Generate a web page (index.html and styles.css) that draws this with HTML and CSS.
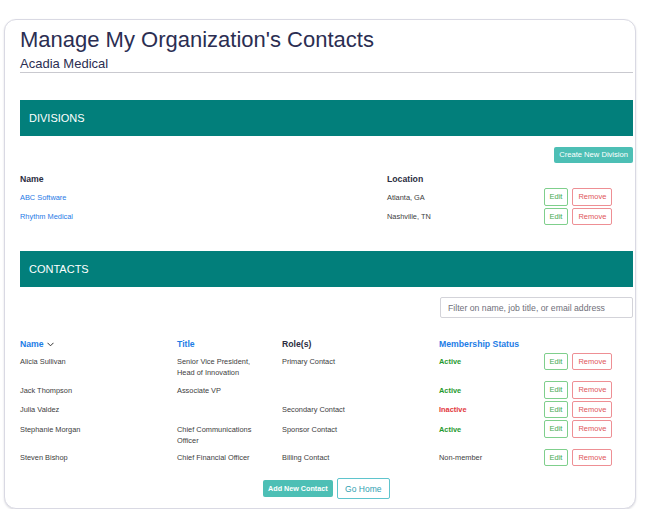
FILE: index.html
```html
<!DOCTYPE html>
<html>
<head>
<meta charset="utf-8">
<link rel="stylesheet" href="styles.css">
</head>
<body>
<div class="card">
  <h1 class="title">Manage My Organization's Contacts</h1>
  <div class="subtitle">Acadia Medical</div>

  <div class="bar bar-divisions">DIVISIONS</div>
  <div class="toolbar"><button class="btn-primary">Create New Division</button></div>
  <table class="grid div-grid">
    <colgroup><col class="dc1"><col class="dc2"><col></colgroup>
    <thead>
      <tr><th>Name</th><th>Location</th><th></th></tr>
    </thead>
    <tbody>
      <tr><td><a class="link">ABC Software</a></td><td>Atlanta, GA</td><td class="actions"><button class="btn-edit">Edit</button><button class="btn-remove">Remove</button></td></tr>
      <tr><td><a class="link">Rhythm Medical</a></td><td>Nashville, TN</td><td class="actions"><button class="btn-edit">Edit</button><button class="btn-remove">Remove</button></td></tr>
    </tbody>
  </table>

  <div class="bar bar-contacts">CONTACTS</div>
  <div class="filter-row"><input class="filter" type="text" placeholder="Filter on name, job title, or email address"></div>
  <table class="grid contact-grid">
    <colgroup><col class="cc1"><col class="cc2"><col class="cc3"><col class="cc4"><col></colgroup>
    <thead>
      <tr>
        <th class="sort">Name<svg class="chev" width="7" height="5" viewBox="0 0 7 5"><path d="M0.5 0.8 L3.5 3.8 L6.5 0.8" fill="none" stroke="#333" stroke-width="1"/></svg></th>
        <th class="sort">Title</th>
        <th>Role(s)</th>
        <th class="sort">Membership Status</th>
        <th></th>
      </tr>
    </thead>
    <tbody>
      <tr><td>Alicia Sullivan</td><td class="wrap">Senior Vice President, Head of Innovation</td><td>Primary Contact</td><td class="active">Active</td><td class="actions"><button class="btn-edit">Edit</button><button class="btn-remove">Remove</button></td></tr>
      <tr><td>Jack Thompson</td><td class="wrap">Associate VP</td><td></td><td class="active">Active</td><td class="actions"><button class="btn-edit">Edit</button><button class="btn-remove">Remove</button></td></tr>
      <tr><td>Julia Valdez</td><td class="wrap"></td><td>Secondary Contact</td><td class="inactive">Inactive</td><td class="actions"><button class="btn-edit">Edit</button><button class="btn-remove">Remove</button></td></tr>
      <tr><td>Stephanie Morgan</td><td class="wrap">Chief Communications Officer</td><td>Sponsor Contact</td><td class="active">Active</td><td class="actions"><button class="btn-edit">Edit</button><button class="btn-remove">Remove</button></td></tr>
      <tr><td>Steven Bishop</td><td class="wrap">Chief Financial Officer</td><td>Billing Contact</td><td>Non-member</td><td class="actions"><button class="btn-edit">Edit</button><button class="btn-remove">Remove</button></td></tr>
    </tbody>
  </table>

  <div class="footer">
    <button class="btn-primary btn-add">Add New Contact</button>
    <button class="btn-home">Go Home</button>
  </div>
</div>
</body>
</html>
```

FILE: styles.css
```css
html, body {
  margin: 0;
  padding: 0;
  background: #ffffff;
}
body {
  font-family: "Liberation Sans", Arial, Helvetica, sans-serif;
  color: #333;
}
.card {
  margin: 19px 15px 0 4px;
  padding: 7px 2px 9px 15px;
  border: 1px solid #d9d9e3;
  border-radius: 12px;
  box-shadow: 0 1px 2px rgba(60, 60, 90, 0.18);
  background: #fff;
}
.title {
  margin: 0;
  font-size: 22px;
  line-height: 25px;
  font-weight: normal;
  color: #2b2e52;
}
.subtitle {
  margin-top: 4px;
  font-size: 13px;
  line-height: 15px;
  padding-bottom: 1px;
  color: #2b2e52;
  border-bottom: 1px solid #c9c9cf;
}
.bar {
  height: 36px;
  background: #027f7b;
  color: #fff;
  font-size: 11px;
  line-height: 36px;
  padding-left: 9px;
}
.bar-divisions { margin-top: 27px; }
.bar-contacts { margin-top: 23.7px; }
.toolbar {
  margin-top: 11px;
  display: flex;
  justify-content: flex-end;
}
button {
  font-family: "Liberation Sans", Arial, Helvetica, sans-serif;
  margin: 0;
  cursor: pointer;
}
.btn-primary {
  height: 16px;
  padding: 0 5px;
  border: none;
  border-radius: 2px;
  background: #4dbfb5;
  color: #fff;
  font-size: 7.6px;
  line-height: 16px;
}
.grid {
  width: 100%;
  border-collapse: collapse;
  table-layout: fixed;
}
.div-grid { margin-top: 9px; }
.dc1 { width: 367px; }
.dc2 { width: 156.5px; }
.cc1 { width: 157px; }
.cc2 { width: 105px; }
.cc3 { width: 157px; }
.cc4 { width: 104.5px; }
.grid th {
  text-align: left;
  font-size: 8.7px;
  line-height: 14px;
  font-weight: bold;
  color: #2b2d42;
  padding: 0 0 2.3px 0;
  white-space: nowrap;
}
.grid th.sort { color: #1d7de6; }
.chev {
  margin-left: 3px;
  vertical-align: 0px;
}
.grid td {
  vertical-align: top;
  font-size: 7.4px;
  line-height: 11px;
  color: #3d3d40;
  padding: 3.5px 0 3px 0;
}
.grid td.wrap { padding-right: 20px; }
.grid td.actions {
  padding: 0 0 1.9px 0;
  white-space: nowrap;
}
.link {
  color: #1f7ae6;
  text-decoration: none;
}
.active { color: #1f9a2e !important; font-weight: bold; }
.inactive { color: #e2373d !important; font-weight: bold; }
.btn-edit, .btn-remove {
  height: 17.5px;
  padding: 0 5px;
  background: #fff;
  border-radius: 2px;
  font-size: 7.5px;
  line-height: 15.5px;
  vertical-align: top;
}
.btn-edit {
  border: 1px solid #7fcf8c;
  color: #3faa52;
  margin-right: 4px;
}
.btn-remove {
  border: 1px solid #ee8f94;
  color: #e0555c;
}
.filter-row {
  margin-top: 10.3px;
  display: flex;
  justify-content: flex-end;
}
.filter {
  width: 193px;
  height: 21px;
  box-sizing: border-box;
  border: 1px solid #d3d3d9;
  border-radius: 2px;
  padding: 0 7px;
  font-family: "Liberation Sans", Arial, Helvetica, sans-serif;
  font-size: 8.7px;
  color: #555;
  outline: none;
}
.filter::placeholder { color: #70707a; }
.contact-grid { margin-top: 18.5px; }
.footer {
  margin-top: 10px;
  display: flex;
  justify-content: center;
  align-items: center;
  gap: 4px;
}
.btn-add {
  height: 17px;
  line-height: 17px;
  font-weight: bold;
  font-size: 7.2px;
  padding: 0 5px;
}
.btn-home {
  height: 21px;
  padding: 0 7.5px;
  border: 1.5px solid #5fc4cd;
  border-radius: 2px;
  background: #fff;
  color: #2f9fb2;
  font-size: 8.5px;
  line-height: 18px;
}
```
